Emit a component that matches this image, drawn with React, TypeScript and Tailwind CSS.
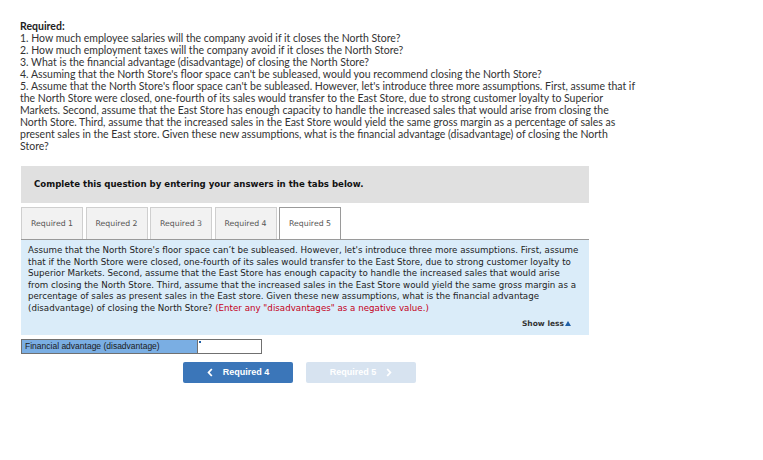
import React from 'react';

const questionLines = [
  '1. How much employee salaries will the company avoid if it closes the North Store?',
  '2. How much employment taxes will the company avoid if it closes the North Store?',
  '3. What is the financial advantage (disadvantage) of closing the North Store?',
  "4. Assuming that the North Store's floor space can't be subleased, would you recommend closing the North Store?",
  "5. Assume that the North Store's floor space can't be subleased. However, let's introduce three more assumptions. First, assume that if",
  'the North Store were closed, one-fourth of its sales would transfer to the East Store, due to strong customer loyalty to Superior',
  'Markets. Second, assume that the East Store has enough capacity to handle the increased sales that would arise from closing the',
  'North Store. Third, assume that the increased sales in the East Store would yield the same gross margin as a percentage of sales as',
  'present sales in the East store. Given these new assumptions, what is the financial advantage (disadvantage) of closing the North',
  'Store?',
];

const panelLines = [
  "Assume that the North Store's floor space can’t be subleased. However, let's introduce three more assumptions. First, assume",
  'that if the North Store were closed, one-fourth of its sales would transfer to the East Store, due to strong customer loyalty to',
  'Superior Markets. Second, assume that the East Store has enough capacity to handle the increased sales that would arise',
  'from closing the North Store. Third, assume that the increased sales in the East Store would yield the same gross margin as a',
  'percentage of sales as present sales in the East store. Given these new assumptions, what is the financial advantage',
];

const tabs = ['Required 1', 'Required 2', 'Required 3', 'Required 4', 'Required 5'];

const Chevron = ({ dir }: { dir: 'left' | 'right' }) => (
  <svg width="6" height="9" viewBox="0 0 6 9" className="shrink-0">
    <path
      d={dir === 'left' ? 'M4.8 1 L1.6 4.5 L4.8 8' : 'M1.2 1 L4.4 4.5 L1.2 8'}
      fill="none"
      stroke="currentColor"
      strokeWidth="1.8"
    />
  </svg>
);

export default function App() {
  return (
    <div className="w-[763px] h-[460px] bg-white overflow-hidden">
      <div className="pl-[20px] pt-[20px] text-[10.5px] leading-[12px] text-[#333] font-['Lato','Liberation_Sans',sans-serif]">
        <p className="font-bold text-[#222]">Required:</p>
        {questionLines.map((q) => (
          <p key={q} className="whitespace-nowrap">
            {q}
          </p>
        ))}
      </div>

      <div className="ml-[21px] w-[568px] font-['DejaVu_Sans','Verdana',sans-serif]">
        <div className="mt-[14px] h-[37px] bg-[#e0e0e0] px-[13px] flex items-center">
          <span className="text-[8.6px] font-bold text-[#111]">
            Complete this question by entering your answers in the tabs below.
          </span>
        </div>

        <div className="mt-[4px] flex gap-[2.5px]">
          {tabs.map((t, i) => (
            <div
              key={t}
              className={
                i === 4
                  ? 'w-[62px] h-[32px] flex items-center justify-center bg-white border border-b-0 border-[#9a9a9a] text-[7.8px] text-[#555]'
                  : 'w-[62px] h-[32px] flex items-center justify-center bg-[#f2f2f2] border border-b-0 border-[#cfcfcf] text-[7.8px] text-[#555]'
              }
            >
              {t}
            </div>
          ))}
        </div>

        <div className="border-t border-[#9a9a9a] bg-[#daecf9] pl-[7px] pr-[8px] pt-[5px] pb-[6px]">
          <div className="text-[8.7px] leading-[11.5px] text-[#222]">
            {panelLines.map((l) => (
              <p key={l} className="whitespace-nowrap">
                {l}
              </p>
            ))}
            <p className="whitespace-nowrap">
              (disadvantage) of closing the North Store?{' '}
              <span className="text-[#c4001a]">(Enter any "disadvantages" as a negative value.)</span>
            </p>
          </div>
          <div className="mt-[4px] flex justify-end pr-[10px]">
            <span className="text-[7.5px] font-bold text-[#333] flex items-center gap-[1px]">
              Show less
              <svg width="6" height="5" viewBox="0 0 6 5">
                <path d="M3 0 L6 5 L0 5 Z" fill="#1f5fa6" />
              </svg>
            </span>
          </div>
        </div>

        <div className="mt-[4px] flex h-[15px] font-['Liberation_Sans',Arial,sans-serif]">
          <div className="w-[177px] bg-[#7aaee3] border border-[#707070] flex items-center pl-[3px] text-[8.5px] text-[#1a1a1a]">
            Financial advantage (disadvantage)
          </div>
          <div className="w-[64px] bg-white border border-l-0 border-[#707070] relative">
            <span className="absolute left-[1px] top-[1px] w-[2px] h-[2px] bg-[#1f5fa6]" />
          </div>
        </div>

        <div className="mt-[8px] ml-[162px] flex gap-[13px] font-['Liberation_Sans',Arial,sans-serif]">
          <div className="w-[110px] h-[21px] rounded-[2px] bg-[#3b76b9] text-white flex items-center justify-center gap-[10px] text-[9px] font-bold">
            <Chevron dir="left" />
            <span>Required 4</span>
          </div>
          <div className="w-[110px] h-[21px] rounded-[2px] bg-[#d7e3f0] text-white flex items-center justify-center gap-[10px] text-[9px] font-bold">
            <span>Required 5</span>
            <Chevron dir="right" />
          </div>
        </div>
      </div>
    </div>
  );
}
